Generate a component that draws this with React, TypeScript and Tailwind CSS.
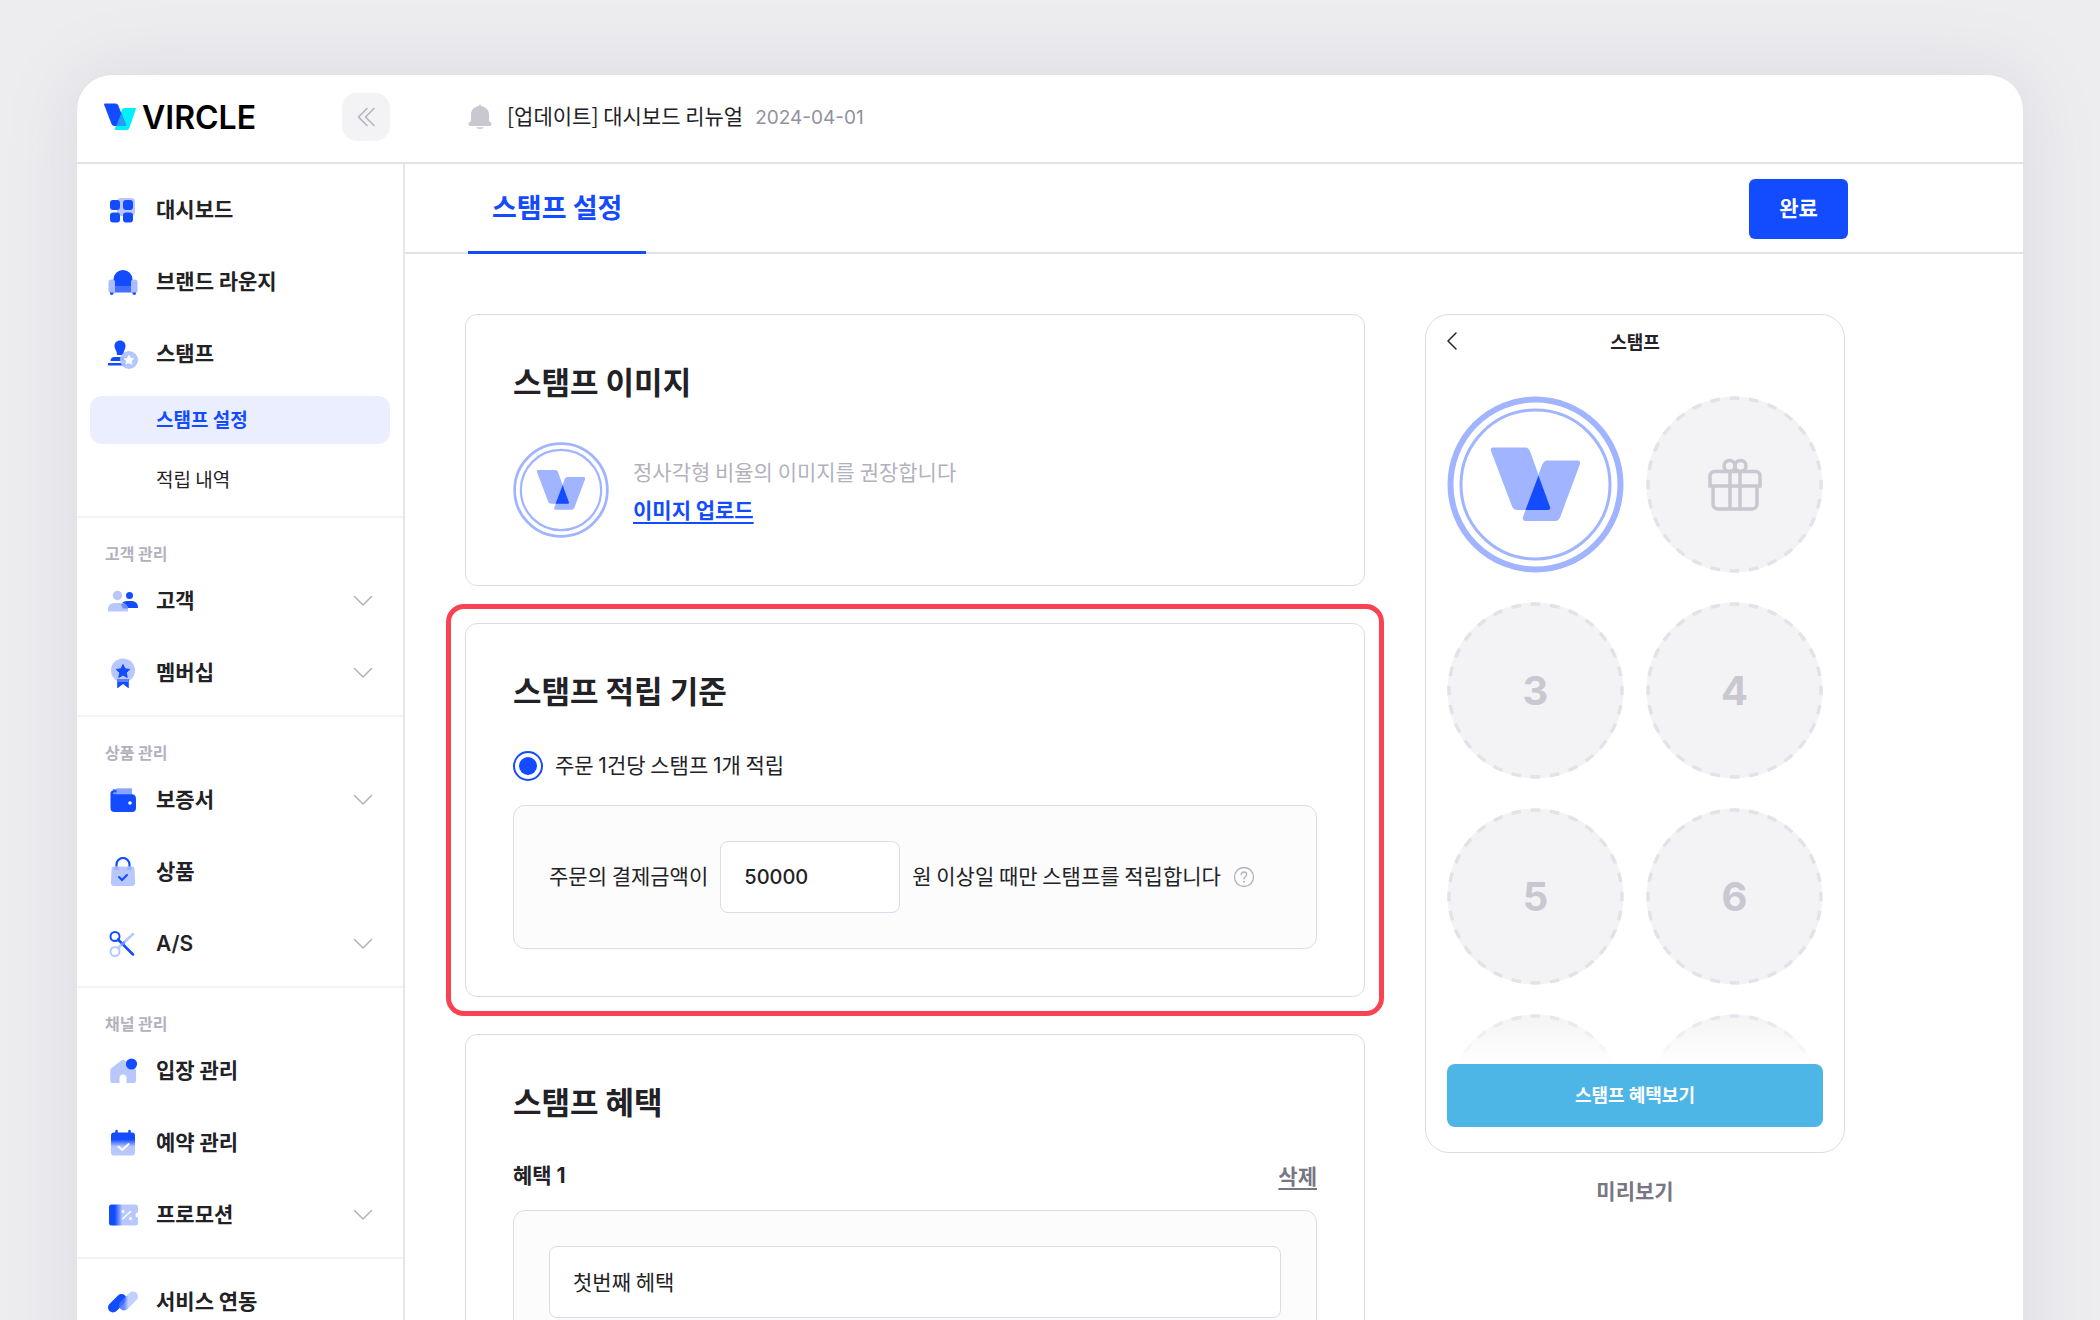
import { useState } from "react";

interface IconProps {
  name: string;
}

// 30x30 two-tone icons used in the sidebar
const MenuIcon: React.FC<IconProps> = ({ name }) => {
  const blue = "#134bff";
  const pale = "#b8c8ff";

  return (
    <svg width="30" height="30" viewBox="0 0 30 30" fill="none" aria-hidden="true" className="shrink-0">
      <defs>
        <linearGradient id={`${name}-v`} x1="0" y1="0" x2="0" y2="1">
          <stop offset="0.3" stopColor={blue} />
          <stop offset="0.62" stopColor={pale} />
        </linearGradient>
        <linearGradient id={`${name}-h`} x1="0" y1="0" x2="1" y2="0">
          <stop offset="0.2" stopColor={blue} />
          <stop offset="0.46" stopColor={pale} />
        </linearGradient>
        <linearGradient id={`${name}-s`} x1="0" y1="0" x2="1" y2="0">
          <stop offset="0" stopColor="#4a74ff" />
          <stop offset="0.5" stopColor={pale} />
        </linearGradient>
      </defs>
      {name === "dashboard" && (
        <>
          <rect x="9" y="3" width="18" height="18" rx="4" fill={pale} />
          <rect x="2" y="5" width="10" height="10" rx="3" fill={blue} />
          <rect x="15" y="5" width="10" height="10" rx="3" fill={blue} />
          <rect x="2" y="17.5" width="10" height="10" rx="3" fill={blue} />
          <rect x="15" y="17.5" width="10" height="10" rx="3" fill={blue} />
        </>
      )}
      {name === "lounge" && (
        <>
          <path d="M5.5 12.500a9.500 9.500 0 0 1 19 0V19h-19z" fill={blue} />
          <rect x="5" y="19" width="20" height="6.5" fill="#4370ff" />
          <path d="M2 25h3.500v1.200a1.750 1.750 0 0 1-3.500 0zM24.500 25H28v1.200a1.750 1.750 0 0 1-3.500 0z" fill={blue} />
          <path d="M3.500 12.500h1a2.500 2.500 0 0 1 2.500 2.500v10.500H2a1.500 1.500 0 0 1-1.500-1.500v-8.500a3 3 0 0 1 3-3zM26.500 12.500h-1a2.500 2.500 0 0 0-2.500 2.500v10.500h5a1.500 1.500 0 0 0 1.500-1.500v-8.500a3 3 0 0 0-3-3z" fill="#a9bcff" />
        </>
      )}
      {name === "stamp" && (
        <>
          <path d="M12 1.500c3.200 0 5.500 2.300 5.500 5.500 0 3-2 4.500-2 9h-6.500c0-4.500-2.500-6-2.500-9 0-3.200 2.300-5.500 5.500-5.500z" fill={blue} />
          <path d="M6.500 18H19v4H2.500c0-2.500 1.500-4 4-4z" fill={blue} />
          <path d="M0 24h20v2.500H0z" fill={blue} />
          <circle cx="21" cy="21" r="9" fill="#b0c2ff" fillOpacity="0.92" />
          <path d="m21 16.200 1.500 3 3.300.5-2.400 2.300.6 3.300-3-1.600-3 1.600.6-3.300-2.400-2.300 3.300-.5z" fill="#fff" stroke="#fff" strokeWidth="0.8" strokeLinejoin="round" />
        </>
      )}
      {name === "customer" && (
        <>
          <circle cx="21.5" cy="9.5" r="3.5" fill={blue} />
          <path d="M13 22v-1.500a5.500 5.500 0 0 1 5.500-5.500H24a6 6 0 0 1 6 6v1z" fill={blue} />
          <circle cx="9.5" cy="9.5" r="4.7" fill={pale} />
          <path d="M0 25.500V23a6 6 0 0 1 6-6h8a6 6 0 0 1 6 6v2.500z" fill={pale} />
          <path d="M13 18.500c4-1.500 7 1 7 4H15z" fill="#4570ff" fillOpacity="0.7" />
        </>
      )}
      {name === "membership" && (
        <>
          <circle cx="15" cy="12.5" r="12" fill={pale} />
          <path d="M9.200 21h11.600v9.500L15 26l-5.800 4.500z" fill={blue} />
          <path d="m15 6.500 2 4.300 4.700.6-3.400 3.300.9 4.700-4.200-2.300-4.200 2.300.9-4.700-3.400-3.300 4.700-.6z" fill={blue} stroke={blue} strokeLinejoin="round" />
          <path d="M9.200 22.500h11.600" stroke="#5c80ff" strokeWidth="3" />
        </>
      )}
      {name === "warranty" && (
        <>
          <path d="M5 4h18v8H5z" fill="#7996ff" />
          <path d="M8.500 3.300H24V10H8.500z" fill="#8ba4ff" />
          <path d="M2.500 8.500c0-2 1.300-3.300 3-3.300h3v2H6a1 1 0 0 0 0 2h17.500A4.500 4.500 0 0 1 28 13.500v9.500a4 4 0 0 1-4 4H6.500a4 4 0 0 1-4-4z" fill={blue} />
          <circle cx="22" cy="18" r="1.8" fill="#fff" />
        </>
      )}
      {name === "product" && (
        <>
          <path d="M8.500 10V7.500a6.500 6.500 0 0 1 13 0V10" stroke={blue} strokeWidth="2.2" />
          <path d="M6 9.500h18a2.500 2.500 0 0 1 2.500 2.200l.6 14.300a3 3 0 0 1-3 3H5.900a3 3 0 0 1-3-3l.6-14.300A2.500 2.500 0 0 1 6 9.500z" fill={pale} />
          <path d="M6 10h5v3H6zM19 10h5v3h-5z" fill="#8da6ff" fillOpacity="0.6" />
          <path d="m11 20 3 3 5-5" stroke={blue} strokeWidth="2" strokeLinecap="round" />
        </>
      )}
      {name === "repair" && (
        <>
          <circle cx="7" cy="7.5" r="4.5" stroke={blue} strokeWidth="2" />
          <path d="m10 10.500 15 15" stroke={blue} strokeWidth="2.5" strokeLinecap="round" />
          <circle cx="7" cy="22.5" r="4.5" stroke={pale} strokeWidth="2" />
          <path d="m10 19 15-14" stroke={pale} strokeWidth="2.5" strokeLinecap="round" />
          <path d="m13.500 16 3-3" stroke="#6b8bff" strokeWidth="2.5" />
        </>
      )}
      {name === "entrance" && (
        <>
          <path d="M13.300 4.600a2.500 2.500 0 0 1 3.400 0L26.500 12a3 3 0 0 1 1.500 2.500V25a2 2 0 0 1-2 2h-7.500v-5a3.500 3.500 0 0 0-7 0v5H4.300a2 2 0 0 1-2-2V14.500A3 3 0 0 1 3.500 12z" fill={pale} />
          <circle cx="23.5" cy="8" r="5.6" fill={blue} />
        </>
      )}
      {name === "reservation" && (
        <>
          <path d="M8.500 3v4M21.500 3v4" stroke={blue} strokeWidth="2.5" strokeLinecap="round" />
          <rect x="3" y="4.5" width="24" height="23" rx="3" fill={`url(#${name}-v)`} />
          <path d="m10.500 18.500 3.700 3.500 6.500-6" stroke="#fff" strokeWidth="1.8" strokeLinecap="round" />
        </>
      )}
      {name === "promotion" && (
        <>
          <path d="M3.500 4.500h24a2.500 2.500 0 0 1 2.500 2.500v5.500a2.500 2.500 0 0 0 0 5V23a2.500 2.500 0 0 1-2.500 2.500h-24A2.500 2.500 0 0 1 1 23V7a2.500 2.500 0 0 1 2.500-2.500z" fill={`url(#${name}-h)`} />
          <path d="m14.500 19 8-7.500" stroke="#fff" strokeWidth="1.5" strokeLinecap="round" />
          <circle cx="15" cy="11.5" r="1.5" fill="#fff" />
          <circle cx="22.5" cy="18.5" r="1.6" fill="#fff" />
        </>
      )}
      {name === "service" && (
        <>
          <path d="m5 20.500 8.500-8.500" stroke={blue} strokeWidth="10" strokeLinecap="round" />
          <path d="m16 18.500 9-9" stroke={`url(#${name}-s)`} strokeWidth="10" strokeLinecap="round" strokeOpacity="0.85" />
        </>
      )}
    </svg>
  );
};

const Chevron = () => (
  <svg width="20" height="12" viewBox="0 0 20 12" fill="none" aria-hidden="true">
    <path d="m1.500 1.500 8.500 8.500 8.500-8.500" stroke="#b3b1bd" strokeWidth="1.5" strokeLinecap="round" strokeLinejoin="round" />
  </svg>
);

interface StampProps {
  className: string;
  ring: number;
  innerRing: number;
}

const StampMark: React.FC<StampProps> = ({ className, ring, innerRing }) => (
  <svg viewBox="0 0 177 177" fill="none" className={className} role="img" aria-label="스탬프">
    <circle cx="88.5" cy="88.5" r={88 - ring / 2} stroke="#a0b4ff" strokeWidth={ring} />
    <circle cx="88.5" cy="88.5" r={76 - innerRing / 2} stroke="#a0b4ff" strokeWidth={innerRing} />
    <path d="M46 51.500h32c3 0 4.500 2 5.500 5L103 111q.7 3-2 3H71c-3.500 0-5.500-1.500-6.500-5L44 55q-1-3.500 2-3.500z" fill="#a0b4ff" />
    <path d="M101 64.500h30q2.500 0 2 3.500L114 119c-1.500 4-3 6-6.500 6H78q-3-.5-2-4l18.500-50.500c1.500-4 3-6 6.500-6z" fill="#a0b4ff" />
    <path d="M91.500 79.500 103 111q.7 3-2 3H78.500z" fill="#134bff" />
  </svg>
);

const StampSlot: React.FC<{ children?: React.ReactNode }> = ({ children }) => (
  <div className="relative flex aspect-square items-center justify-center">
    <svg viewBox="0 0 177 177" className="absolute inset-0 size-full" aria-hidden="true">
      <circle cx="88.5" cy="88.5" r="88" fill="#f3f3f5" />
      <circle
        cx="88.5"
        cy="88.5"
        r="86.5"
        fill="none"
        stroke="#e3e2e9"
        strokeWidth="3.5"
        pathLength="560"
        strokeDasharray="10 10"
        strokeDashoffset="5"
        transform="rotate(-90 88.5 88.5)"
      />
    </svg>
    <span className="relative font-[Inter,sans-serif] text-[40px] leading-[48px] font-bold text-[#c9c8d1]">
      {children}
    </span>
  </div>
);

const sections = [
  {
    title: "고객 관리",
    items: [
      { icon: "customer", label: "고객", expandable: true },
      { icon: "membership", label: "멤버십", expandable: true },
    ],
  },
  {
    title: "상품 관리",
    items: [
      { icon: "warranty", label: "보증서", expandable: true },
      { icon: "product", label: "상품", expandable: false },
      { icon: "repair", label: "A/S", expandable: true, latin: true },
    ],
  },
  {
    title: "채널 관리",
    items: [
      { icon: "entrance", label: "입장 관리", expandable: false },
      { icon: "reservation", label: "예약 관리", expandable: false },
      { icon: "promotion", label: "프로모션", expandable: true },
    ],
  },
];

interface MenuItemProps {
  icon: string;
  label: string;
  expandable?: boolean;
  latin?: boolean;
}

const MenuItem: React.FC<MenuItemProps> = ({ icon, label, expandable, latin }) => (
  <a href="#" className="flex h-[72px] items-center pr-[30px] pl-[31px] text-[21px] font-bold text-[#222226]">
    <MenuIcon name={icon} />
    <span className={latin ? "ml-[18px] flex-1 font-[Inter,sans-serif] font-semibold" : "ml-[18px] flex-1 pb-0.5"}>
      {label}
    </span>
    {expandable && <Chevron />}
  </a>
);

const Sidebar = () => (
  <nav className="w-[328px] shrink-0 border-r-2 border-[#e6e5ec]">
    <div className="border-b-2 border-[#f3f3f5] pt-[10px] pb-3">
      <MenuItem icon="dashboard" label="대시보드" />
      <MenuItem icon="lounge" label="브랜드 라운지" />
      <MenuItem icon="stamp" label="스탬프" />
      <div className="flex flex-col gap-3 px-[13px] pt-[6px] text-[19px] text-[#222226]">
        <a href="#" className="flex h-12 items-center rounded-xl bg-[#ebeeff] pb-0.5 pl-[66px] font-bold text-[#134bff]">
          스탬프 설정
        </a>
        <a href="#" className="flex h-12 items-center rounded-xl pb-0.5 pl-[66px]">
          적립 내역
        </a>
      </div>
    </div>
    {sections.map((section) => (
      <div key={section.title} className="border-b-2 border-[#f3f3f5] pt-[23px] pb-[6px]">
        <p className="pl-[28px] text-[16px] leading-6 font-bold text-[#b3b1bd]">{section.title}</p>
        {section.items.map((item) => (
          <MenuItem key={item.label} {...item} />
        ))}
      </div>
    ))}
    <div className="pt-[7px]">
      <MenuItem icon="service" label="서비스 연동" />
    </div>
  </nav>
);

const Header = () => (
  <header className="flex h-[89px] items-center border-b-2 border-[#e3e2e9] pb-1">
    <div className="flex w-[328px] items-center pr-[15px] pl-[27px]">
      <svg width="32" height="28" viewBox="0 0 32 28" fill="none" aria-hidden="true">
        <path d="M21 5h10q1.300 0 .9 1.300l-6.500 18.500Q24.700 27 22.700 27H12q-1.500 0-1-1.500L17.800 7q.7-2 3.200-2z" fill="#00f0ff" />
        <path d="M1 .5h10.500q2 0 2.800 2L21.500 21q.5 2-1.500 2H10.300q-2 0-2.800-2L.2 2Q-.2.500 1 .5z" fill="#134bff" />
        <path d="M17.300 10 12.200 23H20q2 0 1.500-2z" fill="#2a98ff" />
      </svg>
      <span className="ml-1.5 pt-0.5 font-[Inter,sans-serif] text-[32px] leading-9 font-semibold text-black">VIRCLE</span>
      <button type="button" aria-label="메뉴 접기" className="ml-auto flex size-12 items-center justify-center rounded-[15px] bg-[#f3f3f5]">
        <svg width="18" height="20" viewBox="0 0 18 20" fill="none" aria-hidden="true">
          <path d="m10 1.500-8.500 8.500 8.500 8.500M17 1.500 8.500 10l8.500 8.500" stroke="#b3b1bd" strokeWidth="1.5" strokeLinecap="round" strokeLinejoin="round" />
        </svg>
      </button>
    </div>
    <div className="flex items-center pl-[63px]">
      <svg width="24" height="26" viewBox="0 0 24 26" fill="#c9c8d1" aria-hidden="true">
        <path d="M12 .5a1 1 0 0 1 1 1v.6c4.500.5 8 4 8 8.400v6.500a2 2 0 0 0 .9.700 2.200 2.200 0 0 1-.9 4.300H3a2.200 2.200 0 0 1-.9-4.300 2 2 0 0 0 .9-.7v-6.500c0-4.400 3.500-7.900 8-8.400v-.6a1 1 0 0 1 1-1z" />
        <path d="M8 23.300h8a4.300 2.500 0 0 1-8 0z" />
      </svg>
      <p className="ml-[15px] flex items-baseline gap-3">
        <a href="#" className="text-[21px] text-[#222226]">[업데이트] 대시보드 리뉴얼</a>
        <time dateTime="2024-04-01" className="font-[Inter,sans-serif] text-[19px] text-[#9190a0]">
          2024-04-01
        </time>
      </p>
    </div>
  </header>
);

const StampImageCard = () => (
  <section className="rounded-xl border border-[#dddce4] px-[47px] pt-[45px] pb-[47px]">
    <h2 className="text-[31px] leading-[42px] font-bold text-[#222226]">스탬프 이미지</h2>
    <div className="mt-10 flex items-center gap-6">
      <StampMark className="size-24" ring={5} innerRing={4} />
      <div className="flex flex-col items-start text-[21px] leading-[38px]">
        <p className="text-[#b3b1bd]">정사각형 비율의 이미지를 권장합니다</p>
        <button type="button" className="font-bold text-[#134bff] underline underline-offset-4">
          이미지 업로드
        </button>
      </div>
    </div>
  </section>
);

const StampRuleCard = () => {
  const [amount, setAmount] = useState<string>("50000");
  const [rule, setRule] = useState<string>("order");

  return (
    <section className="relative rounded-xl border border-[#dddce4] px-[47px] pt-[45px] pb-[47px]">
      {/* Highlight frame around the card */}
      <div className="pointer-events-none absolute -inset-5 rounded-[18px] border-[5px] border-[#fa4352]" />
      <h2 className="text-[31px] leading-[42px] font-bold text-[#222226]">스탬프 적립 기준</h2>
      <label className="mt-10 flex h-[30px] items-center gap-3 text-[21px] leading-[30px] text-[#222226]">
        <input
          type="radio"
          name="rule"
          value="order"
          checked={rule === "order"}
          onChange={(e) => setRule(e.target.value)}
          className="size-[30px] appearance-none rounded-full border-2 border-[#134bff] bg-white bg-clip-content p-[4px] checked:bg-[#134bff]"
        />
        <span className="pb-0.5">
          주문 <span className="font-[Inter,sans-serif]">1</span>건당 스탬프{" "}
          <span className="font-[Inter,sans-serif]">1</span>개 적립
        </span>
      </label>
      <div className="mt-6 flex items-center gap-3 rounded-xl border border-[#dddce4] bg-[#fcfcfc] p-[35px] text-[21px] text-[#222226]">
        <label htmlFor="amount" className="pb-0.5">주문의 결제금액이</label>
        <input
          id="amount"
          type="text"
          value={amount}
          onChange={(e) => setAmount(e.target.value)}
          className="h-[72px] w-[180px] rounded-lg border border-[#dddce4] bg-white px-[23px] font-[Inter,sans-serif] text-[20px] font-medium"
        />
        <span className="pb-0.5">원 이상일 때만 스탬프를 적립합니다</span>
        <button type="button" aria-label="도움말" className="flex">
          <svg width="22" height="22" viewBox="0 0 22 22" fill="none" stroke="#b3b1bd" strokeWidth="1.3" strokeLinecap="round" aria-hidden="true">
            <circle cx="11" cy="11" r="9.5" />
            <path d="M8.300 8.800C8.300 7 9.500 6 11 6s2.700 1 2.700 2.600c0 2-2.700 2.200-2.700 4.400" />
            <circle cx="11" cy="15.8" r="0.4" fill="#b3b1bd" />
          </svg>
        </button>
      </div>
    </section>
  );
};

const StampBenefitCard = () => {
  const [benefit, setBenefit] = useState<string>("첫번째 헤택");

  return (
    <section className="rounded-xl border border-[#dddce4] px-[47px] pt-[45px] pb-[47px]">
      <h2 className="text-[31px] leading-[42px] font-bold text-[#222226]">스탬프 혜택</h2>
      <div className="mt-[38px] flex h-[30px] items-center justify-between text-[21px] leading-[30px] font-bold">
        <label htmlFor="benefit" className="text-[#222226]">
          혜택 <span className="font-[Inter,sans-serif]">1</span>
        </label>
        <button type="button" className="text-[#787684] underline underline-offset-4">삭제</button>
      </div>
      <div className="mt-5 rounded-xl border border-[#dddce4] bg-[#fcfcfc] p-[35px]">
        <input
          id="benefit"
          type="text"
          value={benefit}
          onChange={(e) => setBenefit(e.target.value)}
          className="h-[72px] w-full rounded-lg border border-[#dddce4] bg-white px-[23px] pb-0.5 text-[21px] text-[#222226]"
        />
      </div>
    </section>
  );
};

const Preview = () => (
  <aside className="w-[420px] shrink-0">
    <div className="rounded-3xl border border-[#dddce4] px-[21px] pb-[25px]">
      <div className="relative flex h-[54px] items-center justify-center pb-0.5">
        <button type="button" aria-label="뒤로" className="absolute left-0">
          <svg width="10" height="18" viewBox="0 0 10 18" fill="none" aria-hidden="true">
            <path d="m9 1-8 8 8 8" stroke="#222226" strokeWidth="1.5" strokeLinecap="round" strokeLinejoin="round" />
          </svg>
        </button>
        <h3 className="text-[18px] font-bold text-[#222226]">스탬프</h3>
      </div>
      <div className="relative mt-[27px] h-[668px] overflow-hidden">
        <div className="grid grid-cols-2 gap-x-[22px] gap-y-[29px]">
          <StampMark className="aspect-square w-full" ring={6} innerRing={3} />
          <StampSlot>
            <svg width="54" height="54" viewBox="0 0 54 54" fill="none" stroke="#c9c8d1" strokeWidth="3.5" aria-hidden="true">
              <path d="M2 28V18a4.500 4.500 0 0 1 4.500-4.500h41A4.500 4.500 0 0 1 52 18v10zM5 28v18a5 5 0 0 0 5 5h34a5 5 0 0 0 5-5V28M22 14v37M32 14v37" />
              <circle cx="21.5" cy="8" r="5.5" />
              <circle cx="32.5" cy="8" r="5.5" />
            </svg>
          </StampSlot>
          <StampSlot>3</StampSlot>
          <StampSlot>4</StampSlot>
          <StampSlot>5</StampSlot>
          <StampSlot>6</StampSlot>
          <StampSlot />
          <StampSlot />
        </div>
        {/* Fades the last row out behind the button */}
        <div className="absolute inset-x-0 bottom-0 h-[54px] bg-linear-to-b from-white/0 to-white" />
      </div>
      <button type="button" className="h-[63px] w-full rounded-lg bg-[#4db6e6] pb-0.5 text-[18px] font-bold text-white">
        스탬프 혜택보기
      </button>
    </div>
    <p className="mt-[22px] text-center text-[21px] leading-[30px] font-bold text-[#787684]">미리보기</p>
  </aside>
);

const App = () => (
  <div className="h-screen overflow-hidden bg-[#ededef] px-[76px] pt-[74px] font-['Noto_Sans_CJK_KR',sans-serif]">
    <div className="min-h-full rounded-t-[36px] border border-[#e3e2e9] bg-white shadow-[0_0_72px_#dad8e1]">
      <Header />
      <div className="flex">
        <Sidebar />
        <main className="min-w-0 flex-1">
          <div className="h-[90px] border-b-2 border-[#e3e2e9] pl-[63px]">
            <div className="flex h-[90px] max-w-[1380px] items-center justify-between">
              <a href="#" className="flex h-full items-center border-b-[3px] border-[#134bff] px-6 text-[27px] font-bold text-[#134bff]">
                스탬프 설정
              </a>
              <button type="button" className="h-[60px] w-[99px] rounded-md bg-[#134bff] pb-0.5 text-[21px] font-bold text-white">
                완료
              </button>
            </div>
          </div>
          <div className="flex max-w-[1440px] items-start gap-[60px] pt-[60px] pl-[60px]">
            <div className="flex min-w-0 flex-1 flex-col gap-[37px]">
              <StampImageCard />
              <StampRuleCard />
              <StampBenefitCard />
            </div>
            <Preview />
          </div>
        </main>
      </div>
    </div>
  </div>
);

export default App;
